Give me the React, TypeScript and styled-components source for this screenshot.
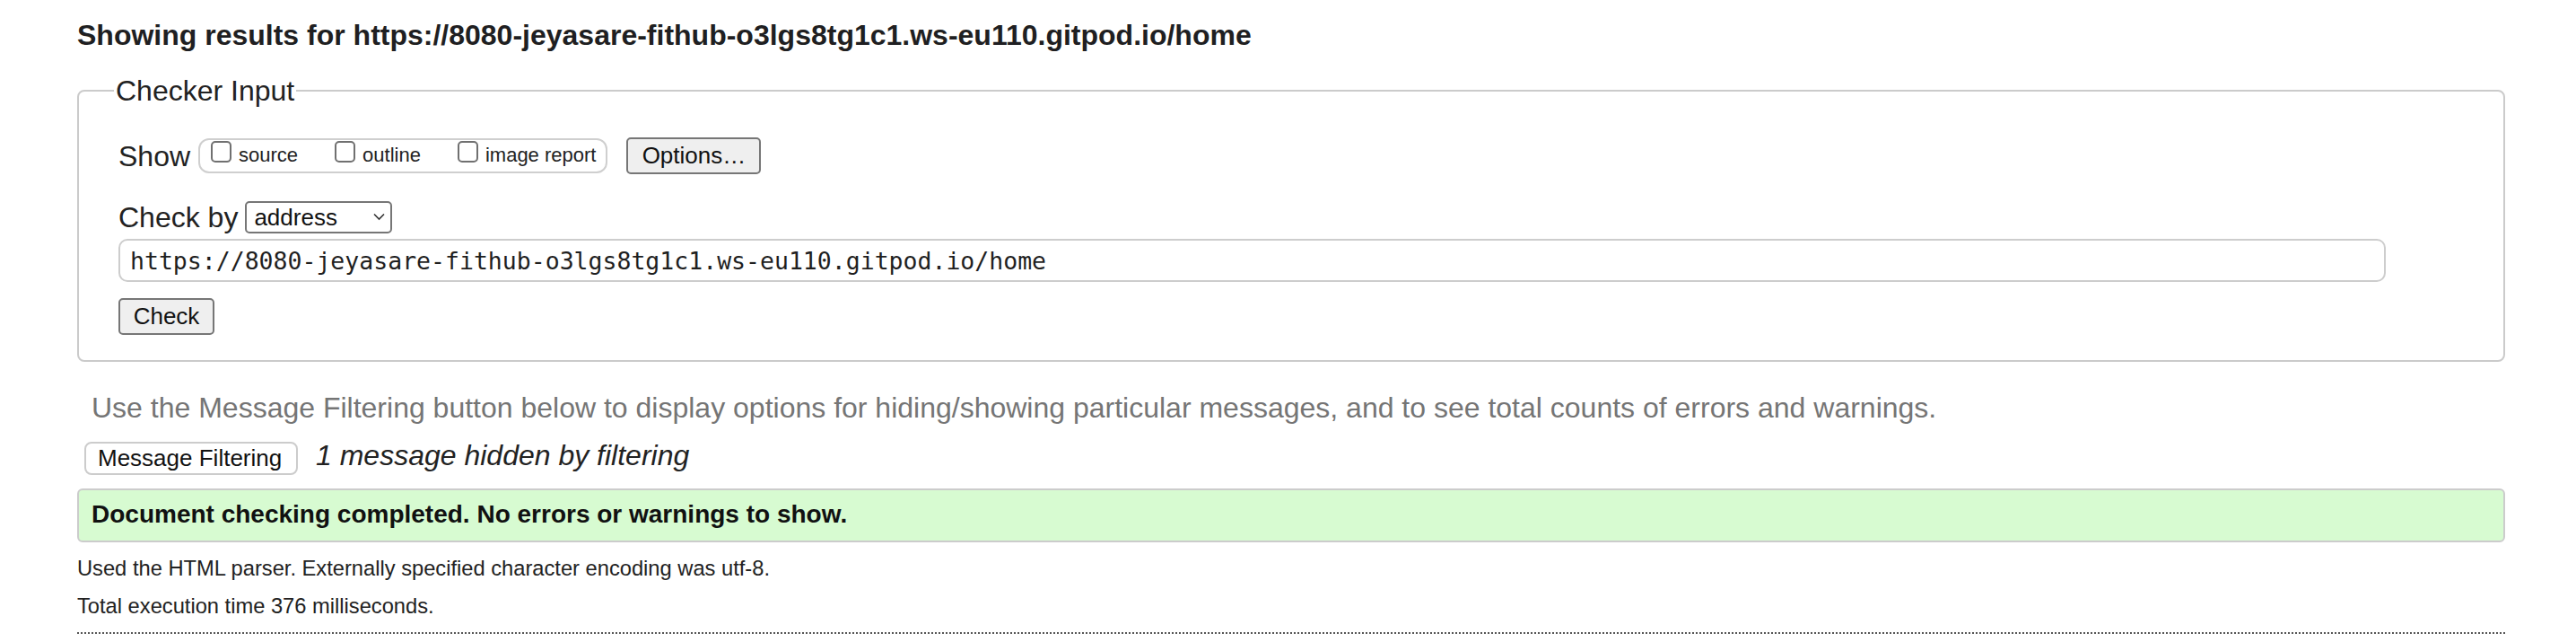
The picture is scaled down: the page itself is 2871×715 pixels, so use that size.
import styled, { createGlobalStyle } from 'styled-components';

const GlobalStyle = createGlobalStyle`
  * {
    box-sizing: border-box;
  }
  body {
    margin: 0;
    background: #ffffff;
    color: #222222;
    font-family: 'Liberation Sans', Arial, Helvetica, sans-serif;
  }
`;

const Page = styled.div`
  padding: 23px 79px 40px 86px;
`;

const ResultsTitle = styled.h2`
  margin: 0;
  font-size: 32px;
  line-height: 32px;
  font-weight: 700;
  color: #1f1f22;
`;

const CheckerFieldset = styled.fieldset`
  margin: 28px 0 0;
  padding: 34px 44px 28px 44px;
  border: 2px solid #cbcbcb;
  border-radius: 8px;
  min-width: 0;
`;

const CheckerLegend = styled.legend`
  font-size: 32px;
  line-height: 36px;
  padding: 0 2px;
  margin-left: -5px;
  color: #222222;
`;

const FormRow = styled.div<{ $gapTop?: number }>`
  display: flex;
  align-items: center;
  margin-top: ${(props) => props.$gapTop ?? 0}px;
`;

const RowLabel = styled.span`
  font-size: 32px;
  line-height: 36px;
  color: #222222;
  margin-right: 9px;
`;

const OptionGroup = styled.div`
  display: flex;
  align-items: flex-start;
  height: 39px;
  padding: 1px 11px 0 12px;
  border: 2px solid #cfcfcf;
  border-radius: 12px;
  gap: 41px;
`;

const OptionLabel = styled.label`
  display: flex;
  align-items: flex-start;
  font-size: 22px;
  line-height: 25px;
  color: #222222;
`;

const OptionText = styled.span`
  margin-top: 3px;
  margin-left: 8px;
`;

const Checkbox = styled.input.attrs({ type: 'checkbox' })`
  appearance: none;
  margin: 0;
  width: 23px;
  height: 24px;
  border: 2px solid #707070;
  border-radius: 5px;
  background: #ffffff;
`;

const GreyButton = styled.button<{ $width: number }>`
  width: ${(props) => props.$width}px;
  height: 41px;
  padding: 0;
  border: 2px solid #767676;
  border-radius: 5px;
  background: #efefef;
  color: #111111;
  font-family: inherit;
  font-size: 26px;
`;

const OptionsButton = styled(GreyButton)`
  margin-left: 21px;
`;

const SelectWrap = styled.div`
  position: relative;
  width: 164px;
  height: 36px;
  margin-left: -1px;
`;

const MethodSelect = styled.select`
  appearance: none;
  width: 100%;
  height: 100%;
  padding: 0 0 0 8px;
  border: 2px solid #767676;
  border-radius: 5px;
  background: #ffffff;
  color: #111111;
  font-family: inherit;
  font-size: 26px;
`;

const Chevron = styled.svg`
  position: absolute;
  right: 8px;
  top: 13px;
  width: 13px;
  height: 9px;
  pointer-events: none;
`;

const UrlInput = styled.input`
  display: block;
  width: 2527px;
  height: 48px;
  margin-top: 6px;
  padding: 0 11px;
  border: 2px solid #cdcdcd;
  border-radius: 10px;
  font-family: 'DejaVu Sans Mono', 'Liberation Mono', monospace;
  font-size: 26.5px;
  color: #1f1f1f;
  outline: none;
`;

const CheckButton = styled(GreyButton)`
  display: block;
  margin-top: 18px;
`;

const FilterHint = styled.p`
  margin: 34px 0 0 16px;
  font-size: 32px;
  line-height: 34px;
  color: #757575;
`;

const FilterRow = styled.div`
  display: flex;
  align-items: flex-start;
  margin: 21px 0 0 8px;
`;

const FilterButton = styled.button`
  width: 238px;
  height: 37px;
  padding: 0 0 0 13px;
  text-align: left;
  border: 2px solid #cccccc;
  border-radius: 8px;
  background: #ffffff;
  color: #111111;
  font-family: inherit;
  font-size: 26px;
`;

const HiddenNote = styled.span`
  margin-left: 20px;
  font-size: 32px;
  line-height: 30px;
  font-style: italic;
  color: #222222;
`;

const SuccessBox = styled.div`
  margin-top: 15px;
  padding: 12px 14px 14px;
  border: 2px solid #cccccc;
  border-radius: 6px;
  background: #d7fbd1;
  font-size: 28px;
  line-height: 30px;
  font-weight: 700;
  color: #111111;
`;

const InfoLine = styled.p<{ $gapTop: number }>`
  margin: ${(props) => props.$gapTop}px 0 0;
  font-size: 23.7px;
  line-height: 26px;
  color: #222222;
`;

const DottedRule = styled.hr`
  margin: 16px 0 0;
  border: none;
  border-top: 2px dotted #555555;
  height: 0;
`;

const showOptions = ['source', 'outline', 'image report'];

const App: React.FC = () => {
  const url = 'https://8080-jeyasare-fithub-o3lgs8tg1c1.ws-eu110.gitpod.io/home';

  return (
    <>
      <GlobalStyle />
      <Page>
        <ResultsTitle>Showing results for {url}</ResultsTitle>
        <CheckerFieldset>
          <CheckerLegend>Checker Input</CheckerLegend>
          <FormRow>
            <RowLabel>Show</RowLabel>
            <OptionGroup>
              {showOptions.map((opt) => (
                <OptionLabel key={opt}>
                  <Checkbox />
                  <OptionText>{opt}</OptionText>
                </OptionLabel>
              ))}
            </OptionGroup>
            <OptionsButton $width={150}>Options…</OptionsButton>
          </FormRow>
          <FormRow $gapTop={30}>
            <RowLabel>Check by</RowLabel>
            <SelectWrap>
              <MethodSelect defaultValue="address">
                <option value="address">address</option>
                <option value="file">file upload</option>
                <option value="text">text input</option>
              </MethodSelect>
              <Chevron viewBox="0 0 13 9">
                <path d="M1 1.5 L6.5 7 L12 1.5" fill="none" stroke="#333" strokeWidth="1.6" />
              </Chevron>
            </SelectWrap>
          </FormRow>
          <UrlInput defaultValue={url} />
          <CheckButton $width={107}>Check</CheckButton>
        </CheckerFieldset>
        <FilterHint>
          Use the Message Filtering button below to display options for hiding/showing particular messages, and to see
          total counts of errors and warnings.
        </FilterHint>
        <FilterRow>
          <FilterButton>Message Filtering</FilterButton>
          <HiddenNote>1 message hidden by filtering</HiddenNote>
        </FilterRow>
        <SuccessBox>Document checking completed. No errors or warnings to show.</SuccessBox>
        <InfoLine $gapTop={16}>Used the HTML parser. Externally specified character encoding was utf-8.</InfoLine>
        <InfoLine $gapTop={16}>Total execution time 376 milliseconds.</InfoLine>
        <DottedRule />
      </Page>
    </>
  );
};

export default App;
